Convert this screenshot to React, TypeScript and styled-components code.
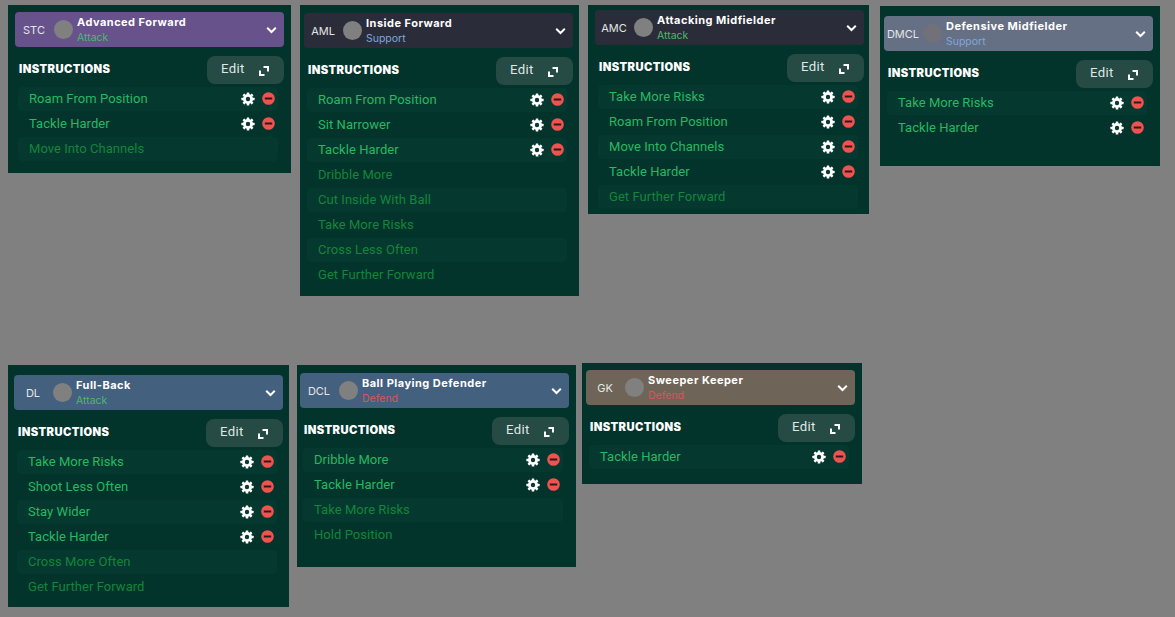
import React from "react";
import styled, { createGlobalStyle } from "styled-components";

const Global = createGlobalStyle`
  html, body { margin: 0; padding: 0; background: #808080; }
  body { font-family: "Inter", "Liberation Sans", sans-serif; }
  #root { width: 1175px; height: 617px; overflow: hidden; }
`;

const Canvas = styled.div`
  position: relative;
  width: 1175px;
  height: 617px;
  background: #808080;
  overflow: hidden;
`;

const Card = styled.section<{ $x: number; $y: number; $w: number; $h: number; $pl: number; $pt: number }>`
  position: absolute;
  left: ${(p) => p.$x}px;
  top: ${(p) => p.$y}px;
  width: ${(p) => p.$w}px;
  height: ${(p) => p.$h}px;
  box-sizing: border-box;
  padding: ${(p) => p.$pt}px 0 0 ${(p) => p.$pl}px;
  background: #02342c;
  display: flex;
  flex-direction: column;
`;

const Header = styled.header<{ $bg: string }>`
  width: 269px;
  height: 35px;
  flex: none;
  border-radius: 4px;
  background: ${(p) => p.$bg};
  display: flex;
  align-items: center;
  color: #fff;
`;

const Pos = styled.span`
  width: 38px;
  flex: none;
  text-align: center;
  font-size: 11px;
  color: #e4e6e6;
`;

const Dot = styled.span<{ $faint?: boolean }>`
  width: 19px;
  height: 19px;
  flex: none;
  margin-left: 1px;
  border-radius: 50%;
  background: ${(p) => (p.$faint ? "#72717a" : "#808080")};
`;

const RoleText = styled.div`
  margin-left: 4px;
  flex: 1;
  display: flex;
  flex-direction: column;
  line-height: 15px;
  min-width: 0;
`;

const RoleName = styled.span`
  font-size: 11px;
  font-weight: 700;
  letter-spacing: 0.48px;
  white-space: nowrap;
`;

const Duty = styled.span<{ $c: string }>`
  font-size: 10.5px;
  color: ${(p) => p.$c};
`;

const Chevron = styled.svg`
  width: 11px;
  height: 8px;
  margin-right: 7px;
  flex: none;
`;

const TitleRow = styled.div`
  width: 269px;
  margin-top: 9px;
  height: 28px;
  display: flex;
  align-items: center;
  justify-content: space-between;
  box-sizing: border-box;
  padding-left: 4px;
  flex: none;
`;

const Title = styled.h3`
  margin: 0 0 3px;
  font-family: "Inter", sans-serif;
  font-size: 11.2px;
  font-weight: 900;
  letter-spacing: 0.4px;
  color: #fff;
`;

const EditButton = styled.button`
  width: 77px;
  height: 28px;
  border: 0;
  border-radius: 8px;
  background: #264a44;
  color: #dfe8e6;
  font: 400 13.2px "Roboto", sans-serif;
  letter-spacing: 0.3px;
  display: flex;
  align-items: center;
  padding: 0 0 3px 14px;
  gap: 14px;
`;

const ExpandIcon = styled.svg`
  width: 10px;
  height: 10px;
  margin-top: 4px;
  flex: none;
`;

const List = styled.ul`
  list-style: none;
  width: 269px;
  box-sizing: border-box;
  margin: 3px 0 0;
  padding: 0 6px 0 3px;
  display: flex;
  flex-direction: column;
  gap: 1px;
`;

const Row = styled.li<{ $off?: boolean; $band?: boolean }>`
  height: 24px;
  box-sizing: border-box;
  padding: 0 3px 2px 11px;
  display: flex;
  align-items: center;
  border-radius: 4px;
  background: ${(p) => (p.$band ? "#05382f" : "transparent")};
  color: ${(p) => (p.$off ? "#14853a" : "#27b862")};
  font: 400 13px "Roboto", sans-serif;
  letter-spacing: 0.05px;
`;

const RowName = styled.span`
  flex: 1;
  white-space: nowrap;
`;

const Icons = styled.span`
  display: flex;
  align-items: center;
  gap: 7px;
  margin-top: 1px;
`;

const Gear = () => (
  <svg width="14" height="14" viewBox="0 0 14 14" aria-hidden="true">
    <g fill="#fff">
      <circle cx="7" cy="7" r="5" />
      {[0, 45, 90, 135].map((a) => (
        <rect key={a} x="5.7" y="0.4" width="2.6" height="13.2" rx="0.5" transform={`rotate(${a} 7 7)`} />
      ))}
    </g>
    <circle cx="7" cy="7" r="2.2" fill="#0a3a30" />
  </svg>
);

const Minus = () => (
  <svg width="13" height="13" viewBox="0 0 13 13" aria-hidden="true">
    <circle cx="6.5" cy="6.5" r="6.3" fill="#ef5350" />
    <rect x="2.8" y="5.5" width="7.4" height="2" fill="#2a1a1a" />
  </svg>
);

const Expand = () => (
  <ExpandIcon viewBox="0 0 10 10" aria-hidden="true" fill="none" stroke="#fff" strokeWidth="2">
    <path d="M4.5 1H9V5.5M1 4.5V9H5.5" />
  </ExpandIcon>
);

type Pack = {
  x: number; y: number; w: number; h: number; pl: number; pt: number; pos: string; role: string; duty: string;
  dutyColor: string; bg: string; on: string[]; off: string[]; faint?: boolean;
};

const GREEN = "#4cb96c";
const BLUE = "#7ea6dd";
const RED = "#d9545c";

const packs: Pack[] = [
  { x: 8, y: 5, w: 283, h: 168, pl: 7, pt: 7, pos: "STC", role: "Advanced Forward", duty: "Attack", dutyColor: GREEN, bg: "#68528c", on: ["Roam From Position", "Tackle Harder"], off: ["Move Into Channels"] },
  { x: 300, y: 5, w: 279, h: 291, pl: 4, pt: 8, pos: "AML", role: "Inside Forward", duty: "Support", dutyColor: BLUE, bg: "#2a2d39", on: ["Roam From Position", "Sit Narrower", "Tackle Harder"], off: ["Dribble More", "Cut Inside With Ball", "Take More Risks", "Cross Less Often", "Get Further Forward"] },
  { x: 588, y: 5, w: 281, h: 209, pl: 7, pt: 5, pos: "AMC", role: "Attacking Midfielder", duty: "Attack", dutyColor: GREEN, bg: "#2a2d39", on: ["Take More Risks", "Roam From Position", "Move Into Channels", "Tackle Harder"], off: ["Get Further Forward"] },
  { x: 880, y: 6, w: 280, h: 160, pl: 4, pt: 10, pos: "DMCL", role: "Defensive Midfielder", duty: "Support", dutyColor: BLUE, bg: "#667084", faint: true, on: ["Take More Risks", "Tackle Harder"], off: [] },
  { x: 8, y: 365, w: 281, h: 242, pl: 6, pt: 10, pos: "DL", role: "Full-Back", duty: "Attack", dutyColor: GREEN, bg: "#43607f", on: ["Take More Risks", "Shoot Less Often", "Stay Wider", "Tackle Harder"], off: ["Cross More Often", "Get Further Forward"] },
  { x: 297, y: 365, w: 279, h: 202, pl: 3, pt: 8, pos: "DCL", role: "Ball Playing Defender", duty: "Defend", dutyColor: RED, bg: "#43607f", on: ["Dribble More", "Tackle Harder"], off: ["Take More Risks", "Hold Position"] },
  { x: 582, y: 363, w: 280, h: 121, pl: 4, pt: 7, pos: "GK", role: "Sweeper Keeper", duty: "Defend", dutyColor: RED, bg: "#6e6558", on: ["Tackle Harder"], off: [] },
];

export default function App() {
  return (
    <Canvas>
      <Global />
      {packs.map((p) => (
        <Card key={p.pos} $x={p.x} $y={p.y} $w={p.w} $h={p.h} $pl={p.pl} $pt={p.pt}>
          <Header $bg={p.bg}>
            <Pos>{p.pos}</Pos>
            <Dot $faint={p.faint} />
            <RoleText>
              <RoleName>{p.role}</RoleName>
              <Duty $c={p.dutyColor}>{p.duty}</Duty>
            </RoleText>
            <Chevron viewBox="0 0 11 8" aria-hidden="true">
              <path d="M1.2 1.8L5.5 6L9.8 1.8" fill="none" stroke="#fff" strokeWidth="2" />
            </Chevron>
          </Header>
          <TitleRow>
            <Title>INSTRUCTIONS</Title>
            <EditButton>Edit <Expand /></EditButton>
          </TitleRow>
          <List>
            {p.on.map((n, i) => (
              <Row key={n} $band={i % 2 === 0}>
                <RowName>{n}</RowName>
                <Icons><Gear /><Minus /></Icons>
              </Row>
            ))}
            {p.off.map((n, i) => (
              <Row key={n} $off $band={(p.on.length + i) % 2 === 0}>
                <RowName>{n}</RowName>
              </Row>
            ))}
          </List>
        </Card>
      ))}
    </Canvas>
  );
}
